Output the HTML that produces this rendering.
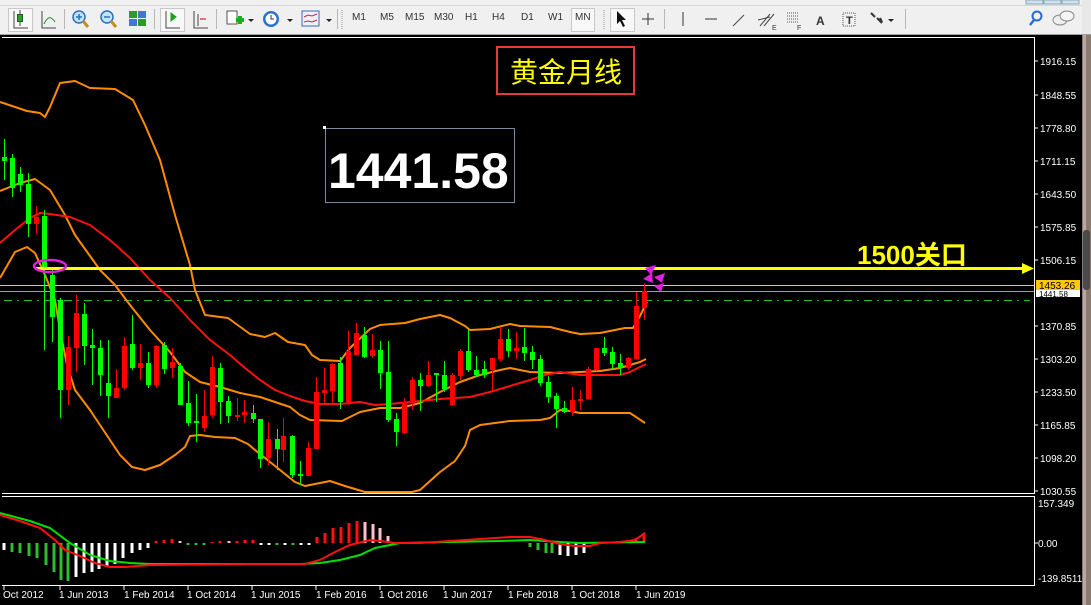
<!DOCTYPE html>
<html><head><meta charset="utf-8"><style>
html,body{margin:0;padding:0;width:1091px;height:605px;overflow:hidden;background:#000;font-family:"Liberation Sans","Noto Sans CJK SC",sans-serif}
#tb{position:absolute;left:0;top:0;width:1091px;height:34px;background:#f0f0f0;border-bottom:1px solid #a0a0a0}
.t{position:absolute;top:12px;font-size:10px;color:#333}
.pb{position:absolute;top:8px;height:22px;border:1px solid #c8c8c8;background:#f8f8f8}
.sep{position:absolute;top:9px;width:1px;height:20px;background:#b8b8b8}
</style></head><body>
<div id="tb">
<div style="position:absolute;left:0;top:5px;width:1091px;height:1px;background:#d8d8d8"></div>
<div class="pb" style="left:8px;width:23px"></div>
<div class="pb" style="left:160px;width:23px"></div>
<div class="pb" style="left:571px;width:22px"></div>
<div class="pb" style="left:610px;width:23px"></div>
<div class="sep" style="left:64px"></div><div class="sep" style="left:154px"></div><div class="sep" style="left:216px"></div><div class="sep" style="left:337px"></div><div class="sep" style="left:664px"></div><div class="sep" style="left:905px"></div>
<svg width="1091" height="34" style="position:absolute;left:0;top:0">
<g stroke="#444" fill="none" stroke-width="1">
<path d="M14 11v17h14M20 10v16"/><rect x="17.5" y="14.5" width="5" height="7" fill="#2ca02c" stroke="#1a601a"/>
<path d="M42 11v17h14"/><path d="M44 24q4-8 7-6t4 4" stroke="#2a8a2a"/>
<path d="M166 11v17h14"/><path d="M171 13l5 4-5 4z" fill="#1aa01a" stroke="#1aa01a"/>
<path d="M194 11v17h14M198 14v12"/><path d="M206 19h-6" stroke="#c00"/>
</g>
<circle cx="79" cy="17" r="6" fill="#bfe4ff" stroke="#2a6fc0" stroke-width="1.5"/><path d="M83 21l5 6" stroke="#c09020" stroke-width="3"/><path d="M76 17h6M79 14v6" stroke="#2a6fc0" stroke-width="1.5"/>
<circle cx="107" cy="17" r="6" fill="#bfe4ff" stroke="#2a6fc0" stroke-width="1.5"/><path d="M111 21l5 6" stroke="#c09020" stroke-width="3"/><path d="M104 17h6" stroke="#2a6fc0" stroke-width="1.5"/>
<rect x="129" y="11" width="8" height="7" fill="#2a9a2a"/><rect x="138" y="11" width="8" height="7" fill="#3a7ad0"/><rect x="129" y="19" width="8" height="7" fill="#3a7ad0"/><rect x="138" y="19" width="8" height="7" fill="#2a9a2a"/>
<rect x="227" y="11" width="10" height="13" fill="#fff" stroke="#555"/><path d="M236 20h8M240 16v8" stroke="#1ab01a" stroke-width="4"/><path d="M248 19l3 3 3-3z" fill="#222"/>
<circle cx="271" cy="19" r="8" fill="#2a70d0"/><circle cx="271" cy="19" r="5.5" fill="#fff"/><path d="M271 15v4h3" stroke="#333" fill="none"/><path d="M287 19l3 3 3-3z" fill="#222"/>
<rect x="302" y="11" width="17" height="15" fill="#eef" stroke="#3a6ab0"/><path d="M304 17l4-2 4 1 5-2M304 22l4-1 4 1 5-2" stroke="#c03030" fill="none"/><path d="M326 19l3 3 3-3z" fill="#222"/>
<path d="M342 10v20M604 10v20" stroke="#999" stroke-dasharray="1,1"/>
<path d="M617 11v13l3-3 3 6 2-1-3-6h4z" fill="#111"/>
<path d="M642 19h12M648 13v12" stroke="#333"/>
<path d="M683 12v14" stroke="#333"/><path d="M705 19h12" stroke="#333"/><path d="M733 26l11-11" stroke="#444"/>
<path d="M760 26l10-12M764 26l10-12M758 20l12-3" stroke="#444"/><text x="772" y="30" font-size="7" fill="#333">E</text>
<path d="M787 13h12M787 16h12M787 19h12M787 22h12" stroke="#555" stroke-dasharray="1,1"/><text x="797" y="30" font-size="7" fill="#333">F</text>
<text x="816" y="25" font-size="12" font-weight="bold" fill="#333">A</text>
<rect x="843" y="13" width="12" height="13" fill="none" stroke="#555" stroke-dasharray="1,1"/><text x="846" y="24" font-size="11" font-weight="bold" fill="#333">T</text>
<path d="M871 13l4 4M877 18l5 5M880 18l2 4" stroke="#333" stroke-width="2"/><path d="M888 19l3 3 3-3z" fill="#222"/>
<circle cx="1037" cy="16" r="4.5" fill="none" stroke="#2a6ad0" stroke-width="2"/><path d="M1034 20l-4 5" stroke="#2a6ad0" stroke-width="2.5"/>
<ellipse cx="1060" cy="20" rx="7" ry="5" fill="#eee" stroke="#888"/><ellipse cx="1067" cy="16" rx="7" ry="5" fill="#f4f4f4" stroke="#888"/>
<rect x="1026" y="0" width="17" height="4" fill="#cfe0f4" stroke="#8aa"/><rect x="1044" y="0" width="17" height="4" fill="#cfe0f4" stroke="#8aa"/><rect x="1062" y="0" width="17" height="4" fill="#cfe0f4" stroke="#8aa"/>
<rect x="1082" y="0" width="9" height="34" fill="#e8e8e8"/>
</svg>
<span class="t" style="left:352px">M1</span><span class="t" style="left:380px">M5</span><span class="t" style="left:405px">M15</span><span class="t" style="left:434px">M30</span><span class="t" style="left:465px">H1</span><span class="t" style="left:492px">H4</span><span class="t" style="left:521px">D1</span><span class="t" style="left:548px">W1</span><span class="t" style="left:575px">MN</span>
</div>
<svg width="1091" height="605" style="position:absolute;left:0;top:0;top:0" font-family="Liberation Sans, sans-serif">
<rect x="0" y="35" width="1091" height="570" fill="#000"/>
<rect x="1082" y="35" width="9" height="570" fill="#8a7a70"/><rect x="1083" y="35" width="3" height="570" fill="#b8a8a0"/><rect x="1083" y="230" width="7" height="60" rx="3" fill="#4a4a4a"/>
<g fill="none" stroke="#fff" stroke-width="1">
<path d="M2 37.5H1034.5V493.5H2"/><path d="M2 496.5H1034.5V585.5H2"/>
</g>
<g stroke="#fff"><path d="M1034 61h4M1034 95h4M1034 128h4M1034 161h4M1034 194h4M1034 227h4M1034 260h4M1034 326h4M1034 359h4M1034 392h4M1034 425h4M1034 458h4M1034 491h4M1034 543h4"/>
<path d="M4 586v4M60 586v4M124 586v4M188 586v4M252 586v4M316 586v4M380 586v4M444 586v4M508 586v4M572 586v4M636 586v4"/></g>
<g fill="#fff" font-size="10">
<text x="1040" y="65">1916.15</text><text x="1040" y="99">1848.55</text><text x="1040" y="132">1778.80</text><text x="1040" y="165">1711.15</text><text x="1040" y="198">1643.50</text><text x="1040" y="231">1575.85</text><text x="1040" y="264">1506.15</text><text x="1040" y="330">1370.85</text><text x="1040" y="363">1303.20</text><text x="1040" y="396">1233.50</text><text x="1040" y="429">1165.85</text><text x="1040" y="462">1098.20</text><text x="1040" y="495">1030.55</text>
<text x="1038" y="507">157.349</text><text x="1038" y="547">0.00</text><text x="1038" y="582">-139.8511</text>
<text x="3" y="598">Oct 2012</text><text x="59" y="598">1 Jun 2013</text><text x="124" y="598">1 Feb 2014</text><text x="187" y="598">1 Oct 2014</text><text x="251" y="598">1 Jun 2015</text><text x="316" y="598">1 Feb 2016</text><text x="379" y="598">1 Oct 2016</text><text x="443" y="598">1 Jun 2017</text><text x="508" y="598">1 Feb 2018</text><text x="571" y="598">1 Oct 2018</text><text x="636" y="598">1 Jun 2019</text>
</g>
<rect x="1036" y="280" width="44" height="10" fill="#ffc800"/><text x="1039" y="289" font-size="10" fill="#000">1453.26</text>
<rect x="1036" y="290" width="44" height="7" fill="#fff"/><text x="1039" y="297" font-size="8" fill="#000">1441.58</text>
<path d="M0 285.5H1034" stroke="#ffc800"/>
<path d="M0 291.5H1034" stroke="#9aa0a8"/>
<path d="M4 300.5H1030" stroke="#22c022" stroke-dasharray="8,5,2,5"/>
<g fill="none" stroke-width="2" stroke-linejoin="round">
<polyline stroke="#ff8c00" points="0,102 27,111 40,113 45,117 50,107 60,83 75,81 90,88 115,89 133,100 145,125 160,160 175,215 190,265 195,290 205,315 228,318 250,334 265,337 275,333 288,342 305,345 312,355 320,360 340,361 350,348 370,329 380,325 405,323 420,319 440,315 450,318 465,326 470,330 490,329 510,324 520,326 550,327 570,332 580,334 600,333 625,328 633,328 640,316 647,302"/>
<polyline stroke="#ff8c00" points="0,278 15,252 27,247 35,253 45,275 55,300 60,330 67,365 75,390 90,410 100,425 110,440 120,455 132,467 145,470 160,465 175,455 185,447 190,436 200,435 215,437 235,438 248,444 255,450 265,458 280,470 295,482 305,486 315,484 330,481 345,486 365,492 412,492 420,490 440,472 455,461 465,446 470,430 480,425 510,421 540,420 550,418 560,410 570,411 580,413 630,413 645,423"/>
<polyline stroke="#ff8c00" points="0,191 20,183 35,179 50,190 65,215 75,235 100,270 115,285 130,305 150,330 170,352 185,372 200,382 220,387 240,393 260,397 275,402 290,407 300,415 310,420 342,421 360,412 380,408 400,408 420,403 440,392 460,382 480,375 500,370 510,368 530,372 560,373 600,371 620,368 640,362 646,359"/>
<polyline stroke="#ff1010" points="0,243 15,230 30,218 40,213 50,214 70,217 90,225 110,240 130,258 150,280 170,298 190,320 210,340 230,355 245,368 260,380 275,390 290,396 305,401 320,404 340,404 360,402 375,405 390,404 410,402 440,399 470,397 490,392 510,386 530,380 545,375 560,372 580,375 620,375 630,372 646,364"/>
</g>
<path stroke="#00ff00" d="M4.5 139v41M12.5 154v43M20.5 167v25M28.5 173v64M44.5 210v140M52.5 268v74M60.5 298v120M84.5 303v62M92.5 329v56M100.5 340v56M108.5 340v78M132.5 315v55M148.5 352v36M164.5 342v32M180.5 363v42M188.5 381v45M196.5 394v48M220.5 363v61M228.5 396v27M253.5 405v18M260.5 419v49M277.5 429v41M292.5 435v43M300.5 461v24M340.5 357v52M364.5 327v31M380.5 341v48M388.5 341v81M396.5 413v33M420.5 373v38M436.5 373v29M444.5 361v31M468.5 330v42M476.5 356v21M484.5 361v17M508.5 329v28M524.5 328v33M532.5 346v23M540.5 355v31M548.5 376v27M556.5 393v35M564.5 401v12M604.5 337v19M612.5 347v22M620.5 354v21"/>
<g fill="#00ff00">
<rect x="2" y="157" width="5" height="4"/><rect x="10" y="158" width="5" height="30"/><rect x="18" y="174" width="5" height="11"/><rect x="26" y="184" width="5" height="40"/><rect x="42" y="216" width="5" height="54"/><rect x="50" y="275" width="5" height="42"/><rect x="58" y="300" width="5" height="90"/><rect x="82" y="314" width="5" height="32"/><rect x="90" y="345" width="5" height="3"/><rect x="98" y="348" width="5" height="27"/><rect x="106" y="383" width="5" height="13"/><rect x="130" y="344" width="5" height="24"/><rect x="146" y="363" width="5" height="22"/><rect x="162" y="345" width="5" height="24"/><rect x="178" y="366" width="5" height="39"/><rect x="186" y="403" width="5" height="20"/><rect x="194" y="421" width="5" height="2"/><rect x="218" y="368" width="5" height="34"/><rect x="226" y="401" width="5" height="15"/><rect x="251" y="413" width="5" height="6"/><rect x="258" y="419" width="5" height="40"/><rect x="275" y="439" width="5" height="10"/><rect x="290" y="436" width="5" height="39"/><rect x="298" y="474" width="5" height="2"/><rect x="338" y="363" width="5" height="39"/><rect x="362" y="335" width="5" height="22"/><rect x="378" y="350" width="5" height="23"/><rect x="386" y="372" width="5" height="48"/><rect x="394" y="419" width="5" height="13"/><rect x="418" y="380" width="5" height="6"/><rect x="434" y="373" width="5" height="2"/><rect x="442" y="375" width="5" height="14"/><rect x="466" y="351" width="5" height="19"/><rect x="474" y="370" width="5" height="5"/><rect x="482" y="369" width="5" height="6"/><rect x="506" y="339" width="5" height="12"/><rect x="522" y="347" width="5" height="6"/><rect x="530" y="352" width="5" height="8"/><rect x="538" y="359" width="5" height="24"/><rect x="546" y="382" width="5" height="15"/><rect x="554" y="396" width="5" height="13"/><rect x="562" y="408" width="5" height="4"/><rect x="602" y="348" width="5" height="5"/><rect x="610" y="352" width="5" height="12"/><rect x="618" y="363" width="5" height="5"/>
</g>
<path stroke="#ff0000" d="M36.5 206v28M68.5 336v69M76.5 295v77M116.5 369v29M124.5 337v53M140.5 344v36M156.5 345v43M172.5 348v30M204.5 390v42M212.5 356v62M237.5 398v23M244.5 400v23M268.5 422v43M283.5 418v44M308.5 442v34M316.5 377v72M324.5 368v35M332.5 363v40M348.5 331v74M356.5 323v32M372.5 334v24M404.5 398v36M412.5 377v33M428.5 361v26M452.5 373v33M460.5 349v31M492.5 361v30M500.5 327v34M516.5 332v27M572.5 387v29M580.5 390v20M588.5 367v33M596.5 348v23M628.5 357v13M636.5 292v68M644.5 283v37"/>
<g fill="#ff0000">
<rect x="34" y="217" width="5" height="7"/><rect x="66" y="347" width="5" height="43"/><rect x="74" y="313" width="5" height="35"/><rect x="114" y="388" width="5" height="10"/><rect x="122" y="346" width="5" height="42"/><rect x="138" y="363" width="5" height="5"/><rect x="154" y="346" width="5" height="39"/><rect x="170" y="362" width="5" height="6"/><rect x="202" y="416" width="5" height="12"/><rect x="210" y="367" width="5" height="48"/><rect x="235" y="415" width="5" height="2"/><rect x="242" y="412" width="5" height="3"/><rect x="266" y="439" width="5" height="19"/><rect x="281" y="436" width="5" height="14"/><rect x="306" y="448" width="5" height="28"/><rect x="314" y="392" width="5" height="57"/><rect x="322" y="390" width="5" height="3"/><rect x="330" y="364" width="5" height="27"/><rect x="346" y="351" width="5" height="51"/><rect x="354" y="333" width="5" height="22"/><rect x="370" y="350" width="5" height="6"/><rect x="402" y="402" width="5" height="31"/><rect x="410" y="380" width="5" height="23"/><rect x="426" y="375" width="5" height="11"/><rect x="450" y="375" width="5" height="30"/><rect x="458" y="351" width="5" height="25"/><rect x="490" y="358" width="5" height="12"/><rect x="498" y="339" width="5" height="20"/><rect x="514" y="348" width="5" height="3"/><rect x="570" y="400" width="5" height="12"/><rect x="578" y="399" width="5" height="2"/><rect x="586" y="369" width="5" height="30"/><rect x="594" y="348" width="5" height="22"/><rect x="626" y="358" width="5" height="10"/><rect x="634" y="306" width="5" height="53"/><rect x="642" y="291" width="5" height="17"/>
</g>
<path d="M35 268.5H1026" stroke="#ffff00" stroke-width="3"/>
<path d="M1022 263l12 5.5-12 5.5z" fill="#ffff00"/>
<ellipse cx="50" cy="266" rx="16" ry="6" fill="none" stroke="#e020e0" stroke-width="2.5"/>
<g fill="#e020e0"><path d="M645 268l11-3-5 10z"/><path d="M654 277l11-4-3 10z"/><path d="M643 279l9-6 1 10z"/><path d="M654 286l10-3-3 9z"/></g>
<text x="857" y="264" font-size="26" font-weight="bold" fill="#ffff00" font-family="Liberation Sans, Noto Sans CJK SC, sans-serif">1500关口</text>
<rect x="497" y="47" width="137" height="47" fill="none" stroke="#e83838" stroke-width="2"/>
<text x="510" y="82" font-size="28" fill="#ffff00" font-family="Noto Sans CJK SC, sans-serif">黄金月线</text>
<rect x="325.5" y="128.5" width="189" height="74" fill="#000" stroke="#7a8aa0"/>
<rect x="323" y="126" width="3" height="3" fill="#fff"/>
<text x="328" y="188" font-size="50" font-weight="bold" fill="#fff">1441.58</text>
<g stroke-width="3">
<path stroke="#fff" d="M4 543v7M76 543v34M84 543v30M92 543v29M99 543v26M107 543v24M115 543v21M123 543v15M132 543v10M140 543v7M148 543v5M261 543v2M269 543v2M285 543v2M301 543v2M309 543v2M560 543v12M568 543v13M576 543v12M584 543v10"/>
<path stroke="#2ebd2e" d="M12 543v9M20 543v10M29 543v13M37 543v15M46 543v22M54 543v29M61 543v37M68 543v38M188 543v2M196 543v2M204 543v2M277 543v2M293 543v2M530 543v4M538 543v7M546 543v10M552 543v10"/>
<path stroke="#ff1010" d="M156 543v-2M164 543v-3M172 543v-4M212 543v-1M220 543v-2M237 543v-2M245 543v-3M253 543v-3M317 543v-6M325 543v-10M333 543v-15M341 543v-16M349 543v-20M357 543v-22M620 543v-2M628 543v-3M636 543v-5M644 543v-10"/>
<path stroke="#ffc0cb" d="M180 543v-2M229 543v-2M365 543v-21M373 543v-19M380 543v-15M388 543v-7M396 543v-1"/>
</g>
<g fill="none" stroke-width="2">
<polyline stroke="#00e000" points="0,513 30,521 50,528 70,543 90,555 110,561 130,563 150,564 300,564 320,563 340,560 360,555 375,548 390,545 400,543 450,542 500,541 530,540 545,541 560,542 580,543 645,542"/>
<polyline stroke="#ff1010" points="0,515 20,521 40,528 55,540 65,550 80,556 95,563 110,567 125,567 150,565 250,564 305,564 320,560 335,552 350,545 370,540 380,541 395,543 420,543 450,541 480,539 510,537 530,537 545,540 560,544 575,546 590,546 600,543 620,542 635,540 645,533"/>
</g>
</svg>
</body></html>
